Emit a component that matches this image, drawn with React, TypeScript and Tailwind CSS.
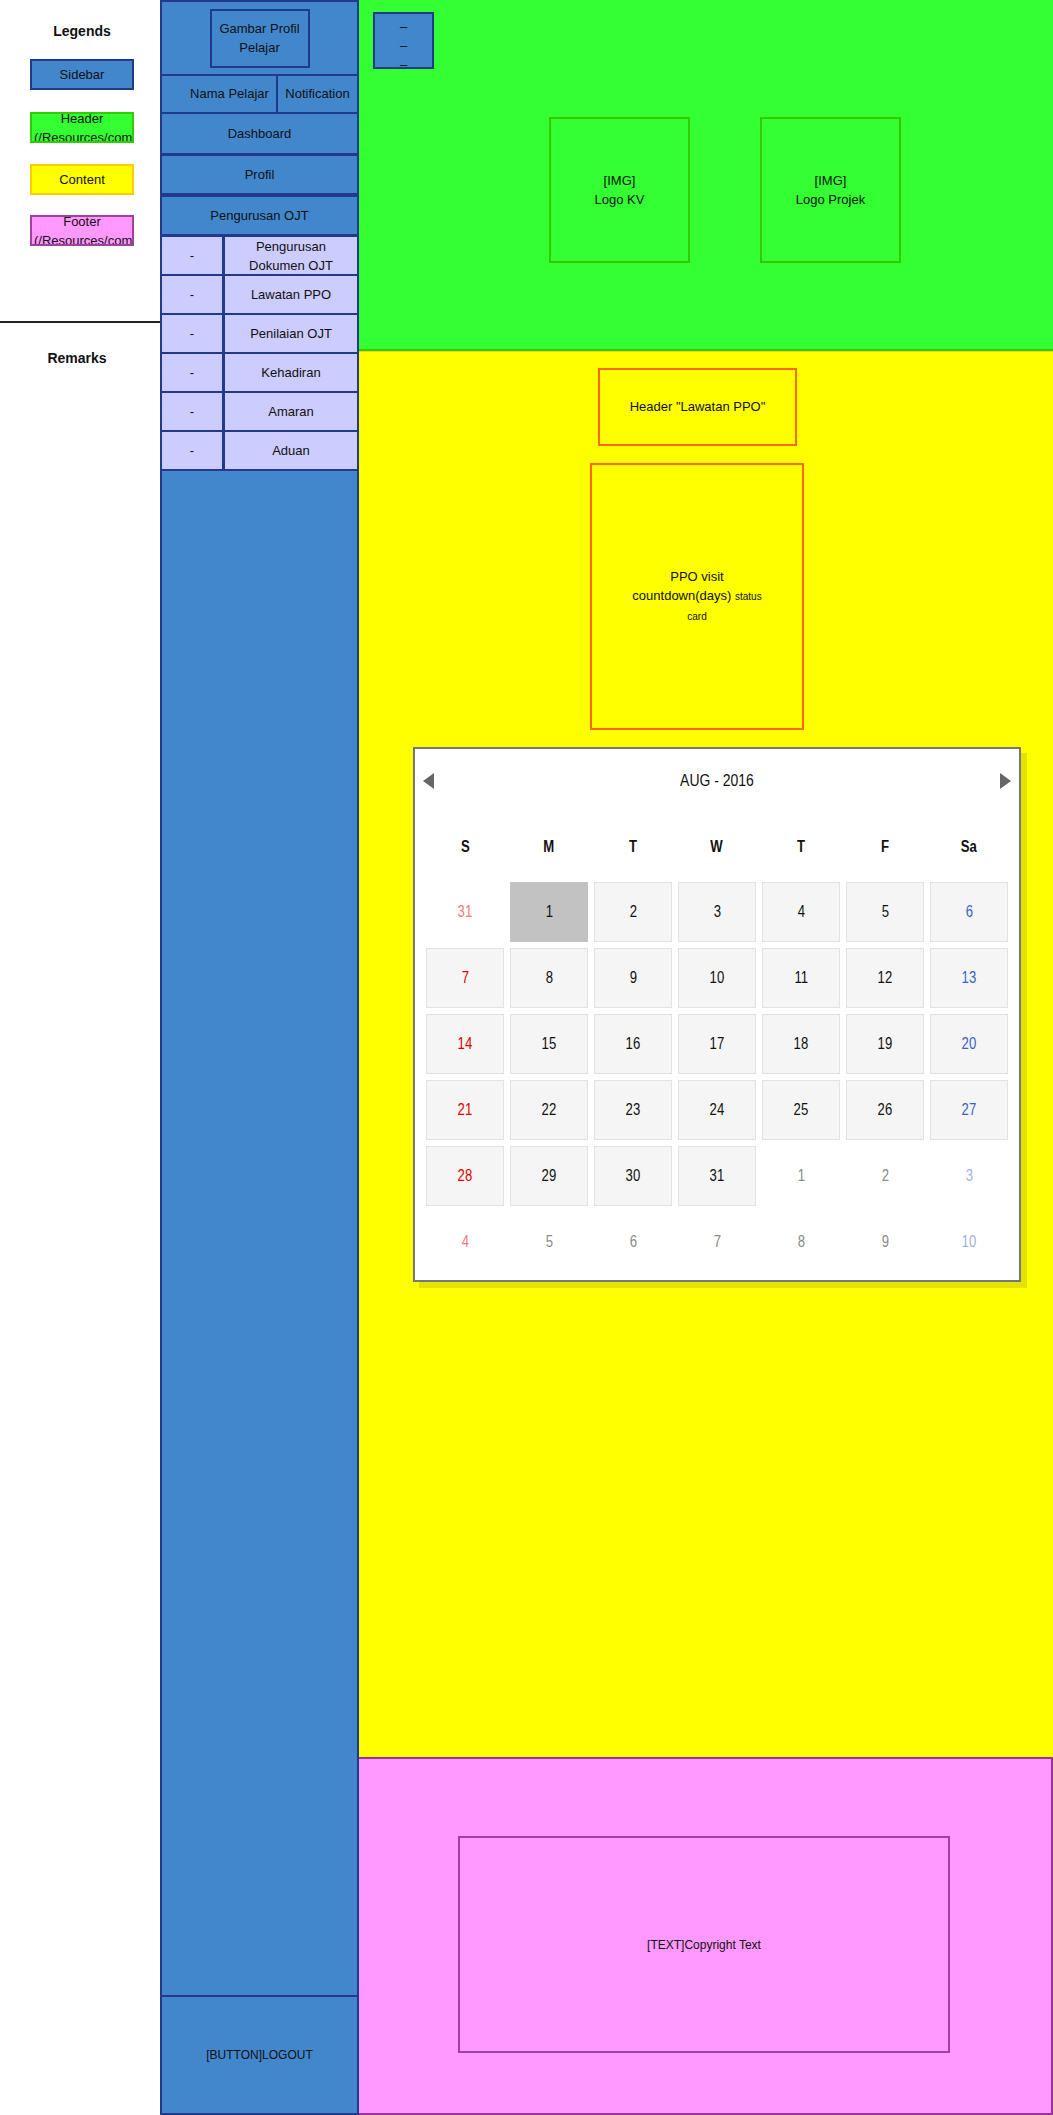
import React from 'react';

type Day = { n: number; other?: boolean; sel?: boolean };

const weeks: Day[][] = [
  [{ n: 31, other: true }, { n: 1, sel: true }, { n: 2 }, { n: 3 }, { n: 4 }, { n: 5 }, { n: 6 }],
  [{ n: 7 }, { n: 8 }, { n: 9 }, { n: 10 }, { n: 11 }, { n: 12 }, { n: 13 }],
  [{ n: 14 }, { n: 15 }, { n: 16 }, { n: 17 }, { n: 18 }, { n: 19 }, { n: 20 }],
  [{ n: 21 }, { n: 22 }, { n: 23 }, { n: 24 }, { n: 25 }, { n: 26 }, { n: 27 }],
  [{ n: 28 }, { n: 29 }, { n: 30 }, { n: 31 }, { n: 1, other: true }, { n: 2, other: true }, { n: 3, other: true }],
  [4, 5, 6, 7, 8, 9, 10].map((n) => ({ n, other: true })),
];

const weekdays = ['S', 'M', 'T', 'W', 'T', 'F', 'Sa'];

const subMenu = ['Pengurusan Dokumen OJT', 'Lawatan PPO', 'Penilaian OJT', 'Kehadiran', 'Amaran', 'Aduan'];

function dayColor(col: number, other?: boolean) {
  if (col === 0) return other ? 'text-[#ec7b7b]' : 'text-[#e00000]';
  if (col === 6) return other ? 'text-[#9fb3e6]' : 'text-[#3b62c6]';
  return other ? 'text-[#8a8a8a]' : 'text-[#111]';
}

function Legends() {
  return (
    <div className="w-[160px] shrink-0 flex flex-col">
      <div className="ml-[30px] mt-[22px] w-[104px] text-center text-[14px] font-bold leading-[19px]">Legends</div>
      <div className="ml-[30px] mt-[18px] w-[104px] h-[31px] bg-[#4287cc] border-2 border-[#213a8c] flex items-center justify-center">
        Sidebar
      </div>
      <div className="ml-[30px] mt-[22px] w-[104px] h-[31px] bg-[#33ff33] border-2 border-[#33cc00] overflow-hidden flex flex-col justify-center px-[2px] text-center leading-[19px]">
        <div>Header</div>
        <div className="whitespace-nowrap text-left">(/Resources/components/header)</div>
      </div>
      <div className="ml-[30px] mt-[21px] w-[104px] h-[31px] bg-[#ffff00] border-2 border-[#ffcc00] flex items-center justify-center">
        Content
      </div>
      <div className="ml-[30px] mt-[20px] w-[104px] h-[31px] bg-[#ff99ff] border-2 border-[#a040a0] overflow-hidden flex flex-col justify-center px-[2px] text-center leading-[19px]">
        <div>Footer</div>
        <div className="whitespace-nowrap text-left">(/Resources/components/footer)</div>
      </div>
      <div className="mt-[75px] h-[2px] w-[160px] bg-[#222]" />
      <div className="mt-[26px] pr-[6px] text-center text-[14px] font-bold leading-[19px]">Remarks</div>
    </div>
  );
}

function Sidebar() {
  return (
    <div className="w-[199px] shrink-0 bg-[#4287cc] border-2 border-b-0 border-[#213a8c] flex flex-col">
      <div className="h-[72px] flex items-center justify-center">
        <div className="w-[100px] h-[59px] border-2 border-[#213a8c] flex items-center justify-center text-center leading-[19px]">
          Gambar Profil
          <br />
          Pelajar
        </div>
      </div>
      <div className="h-[40px] border-y-2 border-[#213a8c] flex">
        <div className="flex-1 flex items-center justify-center pl-[21px]">Nama Pelajar</div>
        <div className="w-[81px] border-l-2 border-[#213a8c] flex items-center justify-center">Notification</div>
      </div>
      <div className="h-[42px] border-b-[3px] border-[#213a8c] flex items-center justify-center">Dashboard</div>
      <div className="h-[41px] border-b-[4px] border-[#213a8c] flex items-center justify-center">Profil</div>
      <div className="h-[40px] border-b-[3px] border-[#213a8c] flex items-center justify-center">Pengurusan OJT</div>
      {subMenu.map((item) => (
        <div key={item} className="h-[39px] bg-[#ccccff] border-b-2 border-[#213a8c] flex">
          <div className="w-[63px] border-r-[3px] border-[#213a8c] flex items-center justify-center">-</div>
          <div className="flex-1 flex items-center justify-center text-center leading-[19px] px-[4px]">{item}</div>
        </div>
      ))}
      <div className="flex-1" />
      <div className="h-[120px] border-y-2 border-[#213a8c] flex items-center justify-center text-[12px]">
        [BUTTON]LOGOUT
      </div>
    </div>
  );
}

function Calendar() {
  return (
    <div className="ml-[54px] mt-[17px] w-[608px] h-[535px] bg-white border-2 border-[#777] shadow-[6px_6px_0_#e3e300] flex flex-col">
      <div className="h-[64px] px-[8px] flex items-center justify-between">
        <div className="w-0 h-0 border-y-[8px] border-y-transparent border-r-[11px] border-r-[#666]" />
        <span className="inline-block scale-x-[0.82] text-[17px] text-[#111]">AUG - 2016</span>
        <div className="w-0 h-0 border-y-[8px] border-y-transparent border-l-[11px] border-l-[#666]" />
      </div>
      <div className="px-[11px]">
        <div className="h-[68px] grid grid-cols-7 gap-x-[6px] items-center text-center text-[16px] font-bold text-[#111]">
          {weekdays.map((w, i) => (
            <div key={i}>
              <span className="inline-block scale-x-[0.82]">{w}</span>
            </div>
          ))}
        </div>
        <div className="mt-[1px] grid grid-cols-7 auto-rows-[60px] gap-[6px] text-[16px]">
          {weeks.map((week, r) =>
            week.map((d, c) => {
              const boxed = !d.other;
              return (
                <div
                  key={`${r}-${c}`}
                  className={`flex items-center justify-center ${dayColor(c, d.other)} ${
                    d.sel
                      ? 'bg-[#c2c2c2] border border-[#c2c2c2]'
                      : boxed
                      ? 'bg-[#f5f5f5] border border-[#e2e2e2]'
                      : 'border border-transparent'
                  }`}
                >
                  <span className="inline-block scale-x-[0.82]">{d.n}</span>
                </div>
              );
            })
          )}
        </div>
      </div>
    </div>
  );
}

export default function App() {
  return (
    <div className="w-[1053px] h-[2115px] flex bg-white overflow-hidden text-[13px] text-[#111] font-['Liberation_Sans',Arial,sans-serif]">
      <Legends />
      <Sidebar />

      <div className="flex-1 flex flex-col">
        {/* Header */}
        <div className="h-[351px] bg-[#33ff33] border-b-2 border-[#33cc00] flex flex-col">
          <div className="ml-[14px] mt-[12px] w-[61px] h-[57px] bg-[#4287cc] border-2 border-[#213a8c] flex flex-col items-center pt-[3px] leading-[19px]">
            <span>–</span>
            <span>–</span>
            <span>–</span>
          </div>
          <div className="mt-[48px] ml-[190px] flex gap-[70px]">
            <div className="w-[141px] h-[146px] border-2 border-[#33cc00] flex items-center justify-center text-center leading-[19px]">
              [IMG]
              <br />
              Logo KV
            </div>
            <div className="w-[141px] h-[146px] border-2 border-[#33cc00] flex items-center justify-center text-center leading-[19px]">
              [IMG]
              <br />
              Logo Projek
            </div>
          </div>
        </div>

        {/* Content */}
        <div className="h-[1406px] bg-[#ffff00] border-t border-[#ffcc00] flex flex-col">
          <div className="ml-[239px] mt-[16px] w-[199px] h-[78px] border-2 border-[#ff6a00] flex items-center justify-center">
            Header "Lawatan PPO"
          </div>
          <div className="ml-[231px] mt-[17px] w-[214px] h-[267px] border-2 border-[#ff6a00] flex items-center justify-center text-center leading-[19px]">
            <div>
              PPO visit
              <br />
              countdown(days) <span className="text-[10px]">status</span>
              <br />
              <span className="text-[10px]">card</span>
            </div>
          </div>
          <Calendar />
        </div>

        {/* Footer */}
        <div className="h-[358px] bg-[#ff99ff] border-2 border-l-0 border-[#993399] flex flex-col">
          <div className="ml-[99px] mt-[77px] w-[492px] h-[217px] border-2 border-[#a040a0] flex items-center justify-center text-[12px]">
            [TEXT]Copyright Text
          </div>
        </div>
      </div>
    </div>
  );
}
